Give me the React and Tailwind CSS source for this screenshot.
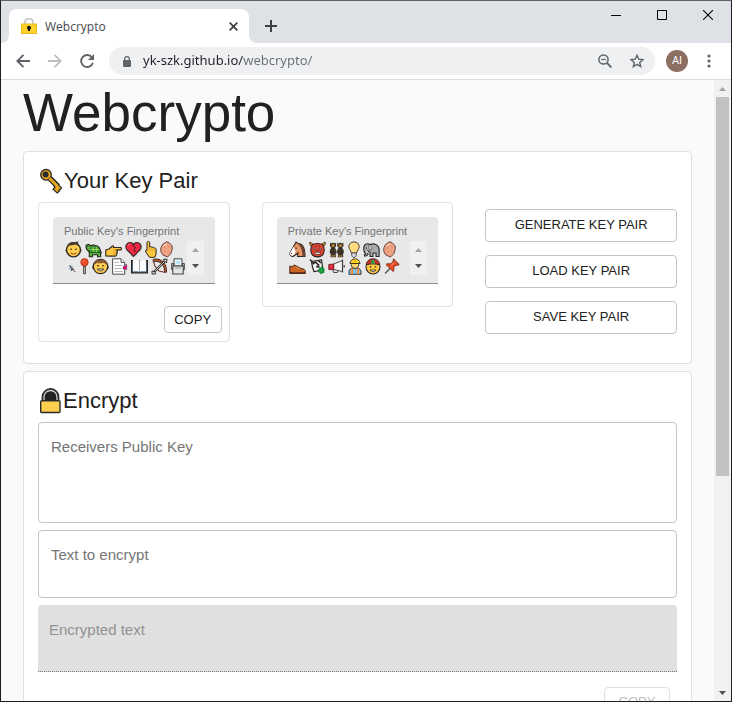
import React from "react";

const INK = "#2b2523";

function Glyph({ w, label, children }) {
  return (
    <svg width={w} height="17" viewBox={`0 0 ${w} 17`} fill="none" role="img" aria-label={label} className="block shrink-0">
      {children}
    </svg>
  );
}

const Boy = () => (
  <Glyph w={17} label="boy">
    <circle cx="2.2" cy="9.5" r="1.3" fill="#ffcf5c" stroke={INK} strokeWidth=".8" />
    <circle cx="14.8" cy="9.5" r="1.3" fill="#ffcf5c" stroke={INK} strokeWidth=".8" />
    <circle cx="8.5" cy="8.8" r="7" fill="#ffcd4f" stroke={INK} strokeWidth="1.3" />
    <path d="M1.800 6.500C2.500 2.500 5 .8 9 1l4.500-.5-.5 1.700 2 3.800C13.500 5.500 12 4.500 11 3.600 8 4.500 5 4 4 5z" fill="#4a3b32" />
    <path d="M5.500 7.500h1.300v1.500H5.500zM10.300 7.500h1.300v1.500h-1.300z" fill={INK} />
    <path d="M5.500 12c2 1.300 4 1.300 6 0" stroke="#8a4a1e" strokeWidth="1" />
  </Glyph>
);

const Turtle = () => (
  <Glyph w={17} label="turtle">
    <path d="M1 6C.5 3 4.500 2.500 5 5c2-1.300 8-1.300 9.500 2l1.800 5-.8.5.2 3.300h-3.200v-2H7.500v2H4.300V11C3 10 2.500 9 1.500 8z" fill="#58b83c" stroke={INK} strokeWidth="1.100" />
    <path d="M4.300 11.500C5 6.500 7.500 5 10 5s4.500 2 5 6.500z" fill="#3c9a3a" stroke="#1d4a22" strokeWidth=".8" />
    <path d="M8 5.500l1 5.500M12 5.500l-.5 5.500M5 8.500h9.500" stroke="#9bdc55" strokeWidth=".9" />
    <path d="M2.200 5h1v1h-1z" fill={INK} />
  </Glyph>
);

const PointRight = () => (
  <Glyph w={17} label="pointing right">
    <path d="M.8 9L4 8l3.300-3c1.200-.5 1.700.6 1.200 1.500h6.800c1.600 0 1.600 2.400 0 2.400h-4c1.400.4 1.300 1.900.4 2.200 1 .8.600 1.900-.3 2.100.4 1-.2 1.900-1.200 1.900H5.500L.8 15z" fill="#ffc83d" stroke={INK} strokeWidth="1.100" />
    <path d="M8 8.800h3M8 11h3M8 13.200h2.500" stroke="#c58b22" strokeWidth=".7" />
  </Glyph>
);

const BrokenHeart = () => (
  <Glyph w={17} label="broken heart">
    <path d="M8.500 15.500L2 9C-.5 5.500 1.500 1.500 5 1.500c2 0 3 1 3.500 2 .5-1 1.500-2 3.500-2 3.500 0 5.500 4 3 7.500z" fill="#ee2a42" stroke={INK} strokeWidth="1.100" />
    <path d="M9.500 2.500L8 5l2.500 1.500L9 8.500l1.500 1.200-1 1.300" stroke={INK} strokeWidth=".9" />
    <path d="M3 5c.3-1.200 1-1.700 2-1.700" stroke="#ff8c98" strokeWidth="1" />
  </Glyph>
);

const PointUp = () => (
  <Glyph w={12} label="pointing up">
    <path d="M2 1.800C2-.1 4.700-.1 4.700 1.800v4.400c.5-.8 2-.7 2.200.3.800-.7 2.100-.3 2.200.6 1-.4 2 .2 2 1.200V13L9.800 16.300H4.500L.8 11C.2 9.500.8 8.600 2 9.300z" fill="#ffc83d" stroke={INK} strokeWidth="1" />
    <path d="M4.700 7v3M7 7.300V10M9.100 7.800V10" stroke="#c58b22" strokeWidth=".7" />
  </Glyph>
);

const Potato = () => (
  <Glyph w={13} label="shell">
    <path d="M6.500.8L9 1.500l3 3.300c.8 3-.5 6-1.300 8L7.500 16l-4.500-2C.8 12 .3 9 1 6.500L2.500 3.500z" fill="#f0a486" stroke="#5f4238" strokeWidth="1" />
    <path d="M4 6.500l1 .6M8.500 5l.8.8M4.500 11l.8-.8M8.300 10.500l.7.8" stroke="#b8593f" strokeWidth="1" />
    <path d="M3.500 5L6.500 2.500" stroke="#ffd0ba" strokeWidth="1.200" />
  </Glyph>
);

const Mosquito = () => (
  <Glyph w={12} label="mosquito">
    <path d="M4.500 7.500l4.500 5M4 11l3.500-1.500M6.500 13l.5-3" stroke="#4b4b55" strokeWidth="1.200" />
    <path d="M6 9l.5-3 2 4zM6.500 10.500L3.500 9l1 3z" fill="#9fc3dc" />
    <path d="M9 13.500h1.500" stroke="#8d5b3a" strokeWidth="1" />
  </Glyph>
);

const RoundPin = () => (
  <Glyph w={9} label="round pushpin">
    <path d="M3.700 8h1.600v7.800H3.700z" fill="#e6e6e6" stroke={INK} strokeWidth=".9" />
    <circle cx="4.500" cy="4.300" r="3.700" fill="#ee4d28" stroke="#a32a15" strokeWidth=".8" />
    <path d="M3 4c0-1 .6-1.500 1.500-1.600" stroke="#ff9a7c" strokeWidth=".9" />
  </Glyph>
);

const Man = () => (
  <Glyph w={17} label="man">
    <circle cx="2" cy="9.500" r="1.500" fill="#ffcf5c" stroke={INK} strokeWidth=".8" />
    <circle cx="15" cy="9.500" r="1.500" fill="#ffcf5c" stroke={INK} strokeWidth=".8" />
    <circle cx="8.500" cy="8.500" r="7.200" fill="#ffcd4f" stroke={INK} strokeWidth="1.200" />
    <path d="M2 6.500C2.500 3 5 1.600 8.500 1.600S14.500 3 15 6.500c-1.500 0-2.500-1-3.500-1.700-2 .7-5 .7-6.500 0-.8 1-1.800 1.700-3 1.700z" fill="#8a5a3b" />
    <path d="M5.300 7h1.400v1.400H5.300zM10.300 7h1.400v1.400h-1.400z" fill={INK} />
    <path d="M5.200 11c1.500 2.500 5.100 2.500 6.600 0z" fill="#fff" stroke={INK} strokeWidth=".9" />
  </Glyph>
);

const Bookmarks = () => (
  <Glyph w={16} label="bookmark tabs">
    <path d="M.6.800h8.400l3.700 3.700v11.700H.6z" fill="#fff" stroke="#4b4b4b" strokeWidth="1" />
    <path d="M9 .8v3.700h3.700" fill="#ddd" stroke="#4b4b4b" strokeWidth=".9" />
    <path d="M2.500 4.500H7M2.500 7.500h8M2.500 10.500h7M2.500 13.500h8" stroke="#b5b5b5" strokeWidth="1" />
    <path d="M11 8.500h2.500V6.500h1.300v5h-1.300v-.5H11z" fill="#e3008c" stroke={INK} strokeWidth=".3" />
  </Glyph>
);

const Book = () => (
  <Glyph w={17} label="open book">
    <path d="M.6 2.500h15.800v12.300H.6z" fill="#52758c" stroke={INK} strokeWidth="1.200" />
    <path d="M2 2h5.500l1 .8 1-.8H15v11.300H9.700l-1.200.8-1.200-.8H2z" fill="#fdfdfd" />
    <path d="M8.500 2.800v11" stroke="#a9b1b5" strokeWidth="1" />
  </Glyph>
);

const Bow = () => (
  <Glyph w={17} label="bow and arrow">
    <path d="M2 2.500c6-1.500 13 2 12.500 12" stroke={INK} strokeWidth="3" />
    <path d="M2 2.500c6-1.500 13 2 12.500 12" stroke="#b0562f" strokeWidth="1.600" />
    <path d="M2 2.500L4 8l4 5 6.500 1.500" stroke="#6e4034" strokeWidth="1.200" />
    <path d="M2.500 14.500L15 2" stroke={INK} strokeWidth="2.200" />
    <path d="M3 14L15 2" stroke="#cfd4d8" strokeWidth=".9" />
    <path d="M12 1.500l4-.5-.5 4zM1 13l3 .5.500 2.500H1z" fill="#d6d6d6" stroke={INK} strokeWidth=".9" />
  </Glyph>
);

const Printer = () => (
  <Glyph w={14} label="printer">
    <path d="M3 .8h8V8H3z" fill="#e9f6fb" stroke="#444" strokeWidth="1" />
    <path d="M.7 5.500h2v6H.700zM11.300 5.500h2v6h-2z" fill="#b9bdbf" stroke="#444" strokeWidth="1" />
    <path d="M4.800 3h4.400v3H4.800z" fill="#b7e3f5" />
    <path d="M1.800 8h10.400v8H1.800z" fill="#e4e5e6" stroke="#444" strokeWidth="1.100" />
    <path d="M4 10h6" stroke="#999" strokeWidth="1" />
  </Glyph>
);

const Horse = () => (
  <Glyph w={17} label="horse">
    <path d="M6 3l1-2 2 1.500c4 0 7 4 7 13H8.500L9 12l-3.500 2.500C3.500 16.500.5 14.500 1 12L4.500 5.500z" fill="#e89562" stroke={INK} strokeWidth="1.100" />
    <path d="M10 2.500c3.500.5 6 4.500 6 13h-2.500C13.500 10 12.500 6 9.500 4z" fill="#6a4034" />
    <path d="M4.500 5.500L1 12c-.3 2.500 2 3.500 4 2l1.700-3.500z" fill="#fff" />
    <path d="M6.500 6.500h1.200V8H6.500zM2 12h1v1H2z" fill={INK} />
  </Glyph>
);

const Ogre = () => (
  <Glyph w={17} label="ogre">
    <path d="M3 5.500C.5 4.500.5 2.500 1 1l3.500 2.500h8L16 1c.5 1.500.5 3.500-2 4.500z" fill="#f4a51d" stroke={INK} strokeWidth=".9" />
    <path d="M3 4c2-2 9-2 11 0 1.500 3 1.500 6 .5 8.500-2 4.500-10 4.500-12 0C1.500 10 1.500 7 3 4z" fill="#e2422f" stroke={INK} strokeWidth="1.100" />
    <path d="M4.300 6.800l2.500 1L4.800 9zM12.700 6.800l-2.500 1 2 1.200z" fill="#fff" stroke={INK} strokeWidth=".6" />
    <path d="M5.500 11.300h6l-.7 2h-4.600z" fill="#fff" stroke={INK} strokeWidth=".7" />
    <path d="M7.500 9.300h2M6 5l1.500.7M11 5l-1.500.7" stroke={INK} strokeWidth=".8" />
  </Glyph>
);

const Twin = ({ x }) => (
  <g transform={`translate(${x} 0)`}>
    <path d="M.7 1.500L2 2.500l1.800-1 1.800 1 1.200-1v4L5.500 6.500l1.700 3v3H6.300l.4 3.700H1.100l.4-3.700H.5v-3L2 6.500.7 5.500z" fill="#39322b" />
    <path d="M2.700 3.700h2.200v1.800H2.700zM1.200 9.500h.8M5.500 9.500h.8M2.200 14.500h1v1H2.200zM4.400 14.500h1v1h-1z" fill="#e8ab38" stroke="#b98428" strokeWidth=".5" />
  </g>
);

const Twins = () => (
  <Glyph w={16} label="dancers">
    <Twin x={0.3} />
    <Twin x={7.6} />
  </Glyph>
);

const Bulb = () => (
  <Glyph w={12} label="light bulb">
    <path d="M6 .9c-3.200 0-5.200 2.300-5.200 4.900C.8 8 3 9.500 3.500 12h5C9 9.500 11.200 8 11.200 5.800 11.200 3.200 9.200.9 6 .9z" fill="#ffdb7d" stroke="#4b4030" strokeWidth="1" />
    <path d="M3.800 12h4.400v3L7 16.300H5L3.800 15z" fill="#e0e0e0" stroke="#4b4b4b" strokeWidth=".9" />
    <path d="M3 5.500C3.200 4 4 3 5.500 2.800" stroke="#fff2bd" strokeWidth="1" />
  </Glyph>
);

const Elephant = () => (
  <Glyph w={17} label="elephant">
    <path d="M1 6c0-3 4-4 6-2.500C11 2 16 3.500 16.200 9L16 15.500h-3V12h-3v3.500H7V11l-2-1c.5 3-.5 4.500-2 5H1.500v-1.500l1-.5C1 11 .5 8 1 6z" fill="#a9acae" stroke={INK} strokeWidth="1.100" />
    <path d="M5.500 4.500c3-.8 4 1.500 3 4.500L6 8.500z" fill="#c6c8c9" stroke="#666" strokeWidth=".8" />
    <path d="M2.800 6.500h1v1.200h-1z" fill={INK} />
    <path d="M3.500 10.500l2 1" stroke="#fff" strokeWidth="1.200" />
  </Glyph>
);

const Shoe = () => (
  <Glyph w={17} label="shoe">
    <path d="M.8 8c1.500 1 3 .5 4.500-1l7 3.500c2.500.3 4 1.200 4 3.500v1.500H.8z" fill="#cc6627" stroke="#4a2a1b" strokeWidth="1" />
    <path d="M.8 13.700l5 .5 10.500-.1v1.600H.8z" fill="#5b2f1d" />
    <path d="M7 9.800l1.500-1M9 10.800l1.300-1" stroke="#f3b07a" strokeWidth=".9" />
  </Glyph>
);

const Cards = () => (
  <Glyph w={16} label="cards">
    <path d="M2.500 3.500L12.500 2l1.500 10-9 1.500L3.500 9z" fill="#f4f4f4" stroke={INK} strokeWidth="1.200" />
    <path d="M1 1.500l3 3M3.500 6l3-2 3 3-2 2M9 2.500l3 2.500" stroke={INK} strokeWidth="1.600" />
    <path d="M7 9.500l3-2.500 1 3z" fill="#3b3b3b" />
    <path d="M9.500 11.500l3-2.500L15 10.500v3.800l-3 1.400-2.500-2z" fill="#18a340" stroke="#0d6728" strokeWidth=".7" />
  </Glyph>
);

const Megaphone = () => (
  <Glyph w={17} label="megaphone">
    <path d="M5.500 6L14.500 2.500v11l-9-2z" fill="#f4f4f4" stroke="#4c4c4c" strokeWidth="1" />
    <path d="M.8 6.500l5-.5v5.700l-5-.2z" fill="#e52a42" stroke="#6b1f28" strokeWidth=".9" />
    <path d="M5 12l.5 2.500h4L10 12.800" stroke="#4c4c4c" strokeWidth="1" />
    <path d="M14.500 1.500v13M16.200 7v2.500" stroke="#3d3d3d" strokeWidth="1.200" />
  </Glyph>
);

const Worker = () => (
  <Glyph w={14} label="construction worker">
    <path d="M1 16.300v-3C1.500 10.500 4 10 7 10s5.500.5 6 3.300v3z" fill="#7fc3ee" stroke={INK} strokeWidth=".9" />
    <path d="M4 10.500v5.800M10 10.500v5.800" stroke="#f58b2c" strokeWidth="2" />
    <circle cx="7" cy="6.700" r="3.800" fill="#ffd467" stroke={INK} strokeWidth=".8" />
    <path d="M2 5.500C2.300 2.500 4.500.9 7 .9s4.700 1.600 5 4.600z" fill="#ffd21c" stroke={INK} strokeWidth=".9" />
    <path d="M7 1v3" stroke="#d8a612" strokeWidth="1" />
  </Glyph>
);

const CapMan = () => (
  <Glyph w={16} label="man with cap">
    <circle cx="8" cy="9" r="7" fill="#ffc942" stroke={INK} strokeWidth="1.100" />
    <path d="M1.200 7C1.500 3 4.500.8 8 .8s6.500 2.200 6.800 6.200C11 5.500 5 5.500 1.200 7z" fill="#c62f2b" stroke={INK} strokeWidth=".9" />
    <path d="M8 1.200c-1.400 1.300-2 2.800-2 4.600h4c0-1.800-.6-3.300-2-4.600z" fill="#2ba84a" />
    <path d="M4.800 8.300h1.400v1.300H4.800zM9.800 8.300h1.400v1.300H9.800z" fill={INK} />
    <path d="M5 12c1.500 2 4.500 2 6 0z" fill="#fff" stroke={INK} strokeWidth=".8" />
  </Glyph>
);

const Pushpin = () => (
  <Glyph w={16} label="pushpin">
    <path d="M1 15.500l5-5" stroke="#555" strokeWidth="1.500" />
    <path d="M9.500.900l5.700 5.600-1.700.8-1.500-.3-2.300 2.500c.5 1.500.3 3-.5 4L2 6.500c1-.9 2.700-.9 4.200-.4L9 3.900z" fill="#ee4d28" stroke="#7c2617" strokeWidth="1" />
    <path d="M7.500 7l2.500-2" stroke="#ff9a7c" strokeWidth="1" />
  </Glyph>
);

function KeyIcon() {
  return (
    <svg width="26" height="28" viewBox="0 0 26 28" fill="none" className="block shrink-0" aria-hidden="true">
      <path d="M11.500 11L20 19.500" stroke="#2b2b2b" strokeWidth="5.600" />
      <path d="M18.500 16.500l5 4.300-1.500 2-1 .2.200 1.300-2 1.700-4-3.800 1.800-2-.8-.8z" fill="#e9a820" stroke="#2b2b2b" strokeWidth="1.300" />
      <circle cx="8" cy="7.800" r="5.300" fill="#e9a820" stroke="#2b2b2b" strokeWidth="1.300" />
      <circle cx="7.600" cy="7.600" r="3" fill="#2b2b2b" />
      <path d="M11.500 11.300l8 8" stroke="#e9a820" strokeWidth="3" />
    </svg>
  );
}

function LockIcon() {
  return (
    <svg width="25" height="28" viewBox="0 0 25 28" fill="none" className="block shrink-0" aria-hidden="true">
      <path d="M4.300 15V10a8.200 8.200 0 0 1 16.400 0V15z" fill="#222" stroke="#2b2b2b" strokeWidth="1.400" />
      <path d="M6 15v-5a6.500 6.500 0 0 1 13 0V15" stroke="#cfcfcf" strokeWidth="1.300" />
      <rect x="2.700" y="13.700" width="19.300" height="11.800" rx="1" fill="#ffcf4f" stroke="#2b2b2b" strokeWidth="1.400" />
    </svg>
  );
}

function Arrow({ up, muted }) {
  return (
    <svg width="7" height="4" viewBox="0 0 7 4" aria-hidden="true" className={muted ? "text-[#a3a3a3]" : "text-[#505050]"}>
      <path d={up ? "M3.500 0L7 4H0z" : "M0 0h7L3.500 4z"} fill="currentColor" />
    </svg>
  );
}

function TabFlare({ flip }) {
  return (
    <svg width="8" height="8" viewBox="0 0 8 8" className={flip ? "-scale-x-100 shrink-0" : "shrink-0"} aria-hidden="true">
      <path d="M8 0v8H0a8 8 0 0 0 8-8z" fill="#fff" />
    </svg>
  );
}

function TitleBar() {
  return (
    <header className="flex h-[42px] shrink-0 items-end bg-[#dee1e6]">
      <TabFlare />
      <div className="flex h-[34px] w-60 items-center rounded-t-lg bg-white pl-3 pr-2">
        <svg width="16" height="16" viewBox="0 0 16 16" fill="none" aria-hidden="true">
          <path d="M4 8V4.500a4 4 0 0 1 8 0V8" stroke="#c9ccce" strokeWidth="2" />
          <rect x=".5" y="6" width="15" height="9.500" fill="#fdd32b" stroke="#e8b923" />
          <circle cx="8" cy="9.800" r="2" fill="#111" />
          <path d="M7 10.500h2V13H7z" fill="#111" />
        </svg>
        <span className="ml-2 flex-1 pt-px font-['Open_Sans',sans-serif] text-xs text-[#45484c]">Webcrypto</span>
        <button type="button" aria-label="Close tab" className="grid size-4 place-items-center">
          <svg width="9" height="9" viewBox="0 0 9 9"><path d="M.7.700l7.600 7.600M8.300.700L.7 8.300" stroke="#3c4043" strokeWidth="1.700" /></svg>
        </button>
      </div>
      <TabFlare flip />
      <button type="button" aria-label="New tab" className="grid h-[34px] w-7 place-items-center">
        <svg width="12" height="12" viewBox="0 0 12 12"><path d="M6 0v12M0 6h12" stroke="#3c4043" strokeWidth="2" /></svg>
      </button>
      <div className="ml-auto flex self-start">
        <button type="button" aria-label="Minimize" className="grid h-7 w-[46px] place-items-center">
          <svg width="10" height="10" viewBox="0 0 10 10"><path d="M0 5.500h10" stroke="#000" /></svg>
        </button>
        <button type="button" aria-label="Maximize" className="grid h-7 w-[46px] place-items-center">
          <svg width="10" height="10" viewBox="0 0 10 10"><path d="M.5.500h9v9h-9z" fill="none" stroke="#000" /></svg>
        </button>
        <button type="button" aria-label="Close" className="grid h-7 w-[46px] place-items-center">
          <svg width="10" height="10" viewBox="0 0 10 10"><path d="M0 0l10 10M10 0L0 10" stroke="#000" strokeWidth="1.100" /></svg>
        </button>
      </div>
    </header>
  );
}

function Toolbar() {
  return (
    <nav className="flex h-[37px] shrink-0 items-center border-b border-[#dadce0] bg-white pl-[6px] pr-[10px]">
      <button type="button" aria-label="Back" className="grid size-8 place-items-center">
        <svg width="14" height="14" viewBox="0 0 14 14" fill="none"><path d="M14 7H1.500M7.500.800L1.300 7l6.200 6.200" stroke="#5f6368" strokeWidth="1.900" /></svg>
      </button>
      <button type="button" aria-label="Forward" className="grid size-8 place-items-center">
        <svg width="14" height="14" viewBox="0 0 14 14" fill="none"><path d="M0 7h12.500M6.500.800L12.700 7l-6.200 6.200" stroke="#bdbfc1" strokeWidth="1.900" /></svg>
      </button>
      <button type="button" aria-label="Reload" className="grid size-8 place-items-center">
        <svg width="14" height="14" viewBox="0 0 14 14" fill="none">
          <path d="M12 3.500A6 6 0 1 0 12.900 8.800" stroke="#5f6368" strokeWidth="1.900" />
          <path d="M14 0v6H8z" fill="#5f6368" />
        </svg>
      </button>
      <div className="ml-[6px] flex h-7 min-w-0 flex-1 items-center rounded-full bg-[#eff0f2] pl-[14px] pr-[11px]">
        <svg width="8" height="11" viewBox="0 0 8 11" fill="none" aria-hidden="true">
          <path d="M1.800 5V2.800a2.200 2.200 0 0 1 4.400 0V5" stroke="#5f6368" strokeWidth="1.200" />
          <rect y="4" width="8" height="7" rx="1" fill="#5f6368" />
        </svg>
        <input
          aria-label="Address"
          defaultValue="yk-szk.github.io/webcrypto/"
          className="ml-3 min-w-0 flex-1 bg-[linear-gradient(to_right,#202124_101px,#6a6e73_101px)] bg-clip-text font-['Noto_Sans',sans-serif] text-[13px] text-transparent outline-none"
        />
        <button type="button" aria-label="Zoom" className="grid size-[14px] place-items-center">
          <svg width="14" height="14" viewBox="0 0 14 14" fill="none" stroke="#5f6368">
            <circle cx="5.500" cy="5.500" r="4.600" strokeWidth="1.500" />
            <path d="M3.200 5.500h4.600" strokeWidth="1.200" />
            <path d="M9 9l4.300 4.300" strokeWidth="1.800" />
          </svg>
        </button>
        <button type="button" aria-label="Bookmark" className="ml-[18px] grid size-[14px] place-items-center">
          <svg width="14" height="14" viewBox="0 0 14 14" fill="none">
            <path d="M7 1.300l1.700 3.900 4.300.4-3.300 2.800 1 4.200L7 10.400l-3.700 2.200 1-4.200L1 5.600l4.300-.4z" stroke="#5f6368" strokeWidth="1.400" />
          </svg>
        </button>
      </div>
      <button type="button" aria-label="Profile" className="ml-[11px] grid size-[22px] place-items-center rounded-full bg-[#8d6e63] font-['Roboto',sans-serif] text-[11px] text-white">
        AI
      </button>
      <button type="button" aria-label="Menu" className="ml-[9px] grid size-6 place-items-center">
        <svg width="4" height="14" viewBox="0 0 4 14" fill="#5f6368"><circle cx="2" cy="2" r="1.600" /><circle cx="2" cy="7" r="1.600" /><circle cx="2" cy="12" r="1.600" /></svg>
      </button>
    </nav>
  );
}

function Card({ icon, title, children }) {
  return (
    <section className="rounded border border-[#e0e0e0] bg-white px-[14px] pb-[21px] pt-[14px]">
      <h2 className="mb-[7px] flex h-[29px] items-center text-[22px] leading-[29px]">
        {icon}
        {title}
      </h2>
      {children}
    </section>
  );
}

function Fingerprint({ title, rows, children }) {
  return (
    <div className="rounded border border-[#e0e0e0] bg-white">
      <div className="p-[14px] pb-[22px]">
        <div className="rounded-t border-b border-[#8c8c8c] bg-[#e8e8e8] px-[11px] pb-2 pt-[6px]">
          <div className="pb-[2px] text-[11px] leading-4 text-[#737373]">{title}</div>
          <div className="flex items-start justify-between">
            <div className="flex flex-col pl-px">
              {rows.map((row, i) => (
                <div key={i} className="flex gap-[3px]">
                  {row.map((Icon, j) => (
                    <Icon key={j} />
                  ))}
                </div>
              ))}
            </div>
            <div className="flex h-[34px] w-[17px] shrink-0 flex-col items-center justify-between bg-[#f0f0f0] py-[7px]">
              <Arrow up muted />
              <Arrow />
            </div>
          </div>
        </div>
      </div>
      {children}
    </div>
  );
}

function OutlineButton({ children }) {
  return (
    <button type="button" className="h-[33px] w-full rounded border border-[#c4c4c4] pb-px text-[13px] leading-5">
      {children}
    </button>
  );
}

function Field({ id, label, area }) {
  return (
    <div className="rounded border border-[#c4c4c4] px-3 pb-2 pt-[14px]">
      <label htmlFor={id} className="block text-[15px] leading-5 text-[#757575]">{label}</label>
      <textarea id={id} className={area} />
    </div>
  );
}

export default function App() {
  return (
    <div className="flex h-screen flex-col overflow-hidden border border-[#1f1f1f] border-t-[#606164] font-['Liberation_Sans',Arial,sans-serif] text-[#212121]">
      <TitleBar />
      <Toolbar />
      <div className="flex min-h-0 flex-1 bg-[#fafafa]">
        <main className="min-w-0 flex-1 overflow-hidden px-[22px]">
          <h1 className="mb-[6px] text-[53px] leading-[65px]">Webcrypto</h1>
          <div className="flex flex-col gap-[7px]">
            <Card icon={<KeyIcon />} title="Your Key Pair">
              <div className="grid grid-cols-3 items-start gap-8">
                <Fingerprint
                  title="Public Key's Fingerprint"
                  rows={[
                    [Boy, Turtle, PointRight, BrokenHeart, PointUp, Potato],
                    [Mosquito, RoundPin, Man, Bookmarks, Book, Bow, Printer],
                  ]}
                >
                  <div className="flex justify-end px-[7px] pb-2">
                    <button type="button" className="h-[27px] w-[58px] rounded border border-[#c4c4c4] text-[13px]">
                      COPY
                    </button>
                  </div>
                </Fingerprint>
                <Fingerprint
                  title="Private Key's Fingerprint"
                  rows={[
                    [Horse, Ogre, Twins, Bulb, Elephant, Potato],
                    [Shoe, Cards, Megaphone, Worker, CapMan, Pushpin],
                  ]}
                />
                <div className="flex flex-col gap-[13px] pt-[7px]">
                  <OutlineButton>GENERATE KEY PAIR</OutlineButton>
                  <OutlineButton>LOAD KEY PAIR</OutlineButton>
                  <OutlineButton>SAVE KEY PAIR</OutlineButton>
                </div>
              </div>
            </Card>
            <Card icon={<LockIcon />} title="Encrypt">
              <div className="flex flex-col gap-[7px]">
                <Field id="receiver" label="Receivers Public Key" area="block h-[57px] w-full resize-none outline-none" />
                <Field id="plain" label="Text to encrypt" area="block h-6 w-full resize-none outline-none" />
                <div className="rounded-t border-b border-dotted border-[#757575] bg-[#e0e0e0] px-[11px] pb-2 pt-[15px]">
                  <label htmlFor="cipher" className="block text-[15px] leading-5 text-[#919191]">Encrypted text</label>
                  <textarea id="cipher" disabled className="block h-[23px] w-full resize-none" />
                </div>
              </div>
              <div className="flex justify-end px-[7px] pt-[15px]">
                <button type="button" disabled className="h-[33px] w-[66px] rounded border border-[#e0e0e0] pb-[3px] text-[13px] text-[#bdbdbd]">
                  COPY
                </button>
              </div>
            </Card>
          </div>
        </main>
        <div aria-hidden="true" className="flex w-[17px] shrink-0 flex-col items-center bg-[#f1f1f1]">
          <div className="grid h-[17px] shrink-0 place-items-center"><Arrow up muted /></div>
          <div className="flex w-[13px] flex-1 flex-col">
            <div className="h-[64.5%] bg-[#c1c1c1]" />
          </div>
          <div className="grid h-[17px] shrink-0 place-items-center"><Arrow /></div>
        </div>
      </div>
    </div>
  );
}
